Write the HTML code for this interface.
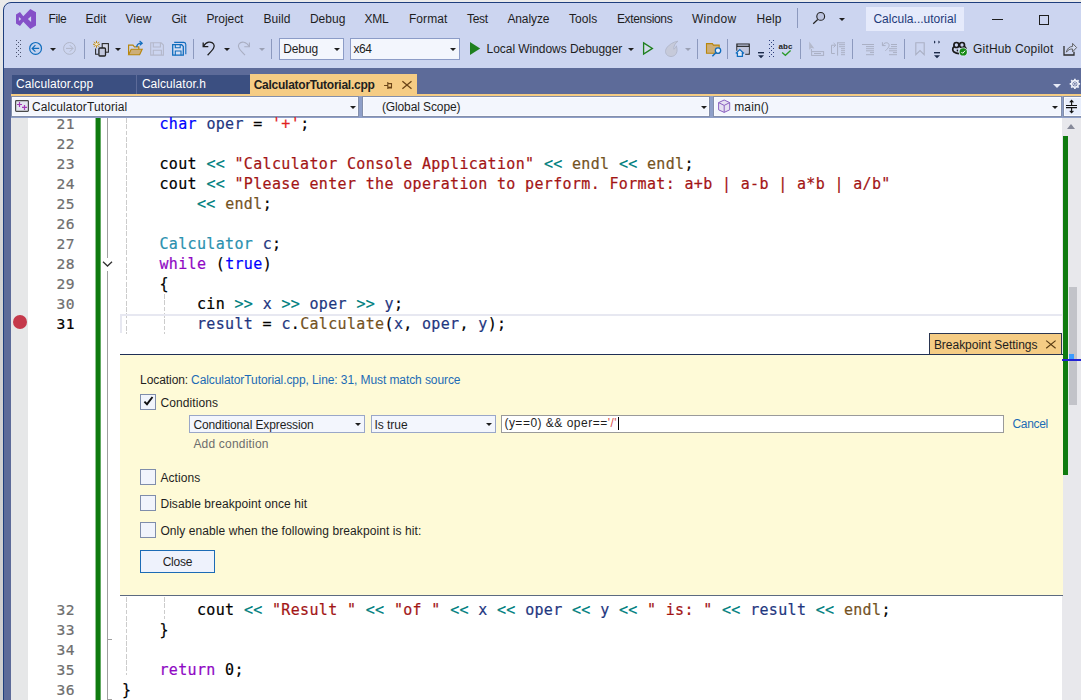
<!DOCTYPE html>
<html lang="en">
<head>
<meta charset="utf-8">
<title>CalculatorTutorial - Microsoft Visual Studio</title>
<style>
html,body{margin:0;padding:0;}
body{width:1081px;height:700px;overflow:hidden;position:relative;background:linear-gradient(to bottom,#ebebeb 0,#e6e6e6 60px,#d2d2d2 260px,#cecece 100%);font-family:"Liberation Sans", "DejaVu Sans", sans-serif;font-size:12px;}
.a{position:absolute;}
#win{left:3px;top:2px;width:1100px;height:720px;box-sizing:border-box;border:1px solid #1f3f7d;border-radius:8px 0 0 0;background:#ccd5f0;}
.t{position:absolute;white-space:pre;line-height:20px;height:20px;font-size:12px;}
.sep{position:absolute;width:1px;top:39px;height:20px;background:#8c99be;}
.combo{position:absolute;box-sizing:border-box;background:#f3f6fd;border:1px solid #8c9cc7;}
.arr{position:absolute;width:0;height:0;border-left:3px solid transparent;border-right:3px solid transparent;border-top:3px solid #1e1e1e;}
.arr.g{border-top-color:#9aa0b4;}
.nav{position:absolute;top:96px;height:21px;box-sizing:border-box;background:#f3f6fd;border:1px solid #838fab;box-shadow:inset 0 0 0 1px #fafbff;}
.ln{position:absolute;left:28px;width:47.2px;text-align:right;white-space:pre;line-height:20px;height:20px;font-family:"DejaVu Sans Mono", "Liberation Mono", monospace;font-size:15.0px;letter-spacing:0.344px;-webkit-text-stroke:0.2px;font-size:14.6px;letter-spacing:0.585px;}
.cl{position:absolute;left:122.0px;white-space:pre;line-height:20px;height:20px;color:#000;font-family:"DejaVu Sans Mono", "Liberation Mono", monospace;font-size:15.0px;letter-spacing:0.344px;-webkit-text-stroke:0.2px;}
.guide{position:absolute;width:1px;background:repeating-linear-gradient(to bottom,#cccccc 0,#cccccc 4.8px,transparent 4.8px,transparent 6.3px);}
.cb{position:absolute;box-sizing:border-box;width:16px;height:16px;left:140px;background:#f1f4fc;border:1px solid #7f8dab;}
svg{position:absolute;overflow:visible;}
</style>
</head>
<body>
<div id="win" class="a"></div>

<!-- title bar -->
<div class="a" style="left:866px;top:7px;width:98px;height:24px;background:#e5eafb;"></div>
<div class="a" style="left:797px;top:8px;width:1px;height:20px;background:#8c99be;"></div>
<div class="a" style="left:992px;top:19px;width:11px;height:1px;background:#1e1e1e;"></div>
<div class="a" style="left:1039px;top:15px;width:10px;height:10px;box-sizing:border-box;border:1px solid #1e1e1e;"></div>

<!-- toolbar -->
<div class="sep" style="left:84px"></div>
<div class="sep" style="left:193px"></div>
<div class="sep" style="left:271px"></div>
<div class="sep" style="left:697px"></div>
<div class="sep" style="left:727px"></div>
<div class="sep" style="left:800px"></div>
<div class="sep" style="left:852px"></div>
<div class="sep" style="left:904px"></div>
<div class="combo" style="left:279px;top:38px;width:65px;height:22px;"></div>
<div class="combo" style="left:350px;top:38px;width:110px;height:22px;"></div>

<!-- document well -->
<div class="a" style="left:4px;top:68px;width:1077px;height:28px;background:#5d6b99;"></div>
<div class="a" style="left:4px;top:96px;width:7px;height:604px;background:#5d6b99;"></div>
<div class="a" style="left:12px;top:75px;width:124px;height:19px;background:#3b4f81;"></div>
<div class="a" style="left:137px;top:75px;width:113px;height:19px;background:#3b4f81;"></div>
<div class="a" style="left:250px;top:74px;width:167px;height:21px;background:#f5cc84;"></div>
<div class="a" style="left:11px;top:94px;width:1070px;height:2px;background:#f5cc84;"></div>

<!-- navigation bar -->
<div class="a" style="left:11px;top:96px;width:1070px;height:22px;background:#8e9fc9;"></div>
<div class="nav" style="left:11px;width:348px;"></div>
<div class="nav" style="left:362px;width:348px;"></div>
<div class="nav" style="left:713px;width:349px;"></div>
<div class="nav" style="left:1063px;width:30px;background:#e8eefc;"></div>
<!-- editor -->
<div class="a" style="left:11px;top:118px;width:1051px;height:582px;background:#ffffff;"></div>
<div class="a" style="left:11px;top:118px;width:17px;height:582px;background:#e6e7e8;"></div>
<div class="a" style="left:107px;top:118px;width:1px;height:582px;background:#a0a0a0;"></div>
<!-- outlining ticks -->
<div class="a" style="left:107px;top:639px;width:5px;height:1px;background:#a0a0a0;"></div>
<div class="a" style="left:107px;top:699px;width:5px;height:1px;background:#a0a0a0;"></div>
<!-- indent guides -->
<div class="guide" style="left:126px;top:118px;height:216px;"></div>
<div class="guide" style="left:164px;top:294px;height:40px;"></div>
<div class="guide" style="left:126px;top:597px;height:78px;"></div>
<div class="guide" style="left:164px;top:597px;height:22px;"></div>
<!-- current line -->
<div class="a" style="left:120px;top:314px;width:942px;height:19px;box-sizing:border-box;border:2px solid #e7e8f1;border-right:0;border-bottom:0;"></div>
<!-- breakpoint glyph -->
<div class="a" style="left:13px;top:315px;width:14px;height:14px;border-radius:50%;background:#c5394b;"></div>

<!-- scrollbar -->
<div class="a" style="left:1062px;top:118px;width:19px;height:582px;background:#e8e8ec;"></div>
<div class="a" style="left:1063px;top:136px;width:5px;height:339px;background:#0f7b0f;"></div>
<div class="a" style="left:1069px;top:287px;width:8px;height:118px;background:#c2c3c9;"></div>
<div class="a" style="left:1067px;top:124px;width:0;height:0;border-left:4.5px solid transparent;border-right:4.5px solid transparent;border-bottom:5px solid #868999;"></div>

<!-- breakpoint settings panel -->
<div class="a" style="left:120px;top:354px;width:943px;height:242px;box-sizing:border-box;background:#fefad7;border-top:1px solid #1f2f55;border-bottom:1px solid #5c6a80;"></div>
<div class="a" style="left:929px;top:333px;width:133px;height:22px;box-sizing:border-box;background:#f5cc84;border:1px solid #2a3550;"></div>
<div class="a" style="left:1062px;top:359px;width:19px;height:2px;background:#2222d4;"></div>
<div class="a" style="left:1069px;top:354px;width:5px;height:5px;background:#3b9cff;"></div>

<div class="cb" style="top:394px;"></div>
<div class="cb" style="top:469px;"></div>
<div class="cb" style="top:495px;"></div>
<div class="cb" style="top:522px;"></div>
<div class="combo" style="left:189px;top:415px;width:176px;height:18px;border-color:#9aa7c8;"></div>
<div class="combo" style="left:371px;top:415px;width:125px;height:18px;border-color:#9aa7c8;"></div>
<div class="a" style="left:501px;top:415px;width:503px;height:18px;box-sizing:border-box;background:#fff;border:1px solid #9a9a9a;"></div>
<div class="a" style="left:618px;top:417px;width:1px;height:13px;background:#000;"></div>
<div class="a" style="left:140px;top:550px;width:75px;height:23px;box-sizing:border-box;background:#eef2fc;border:1px solid #1c6bb5;"></div>

<!-- dropdown arrows -->
<div class="arr" style="left:50px;top:48px"></div>
<div class="arr" style="left:115px;top:48px"></div>
<div class="arr" style="left:224px;top:48px"></div>
<div class="arr g" style="left:259px;top:48px"></div>
<div class="arr" style="left:334px;top:48px"></div>
<div class="arr" style="left:450px;top:48px"></div>
<div class="arr" style="left:628px;top:48px"></div>
<div class="arr g" style="left:685px;top:48px"></div>
<div class="arr" style="left:839px;top:18px"></div>
<div class="arr" style="left:350px;top:106px"></div>
<div class="arr" style="left:701px;top:106px"></div>
<div class="arr" style="left:1052px;top:106px"></div>
<div class="arr" style="left:355px;top:423px"></div>
<div class="arr" style="left:486px;top:423px"></div>

<svg width="1081" height="700" viewBox="0 0 1081 700" style="left:0;top:0;pointer-events:none" fill="none" stroke-linecap="butt">
<!-- VS logo -->
<g transform="translate(16,9)" fill="#8550c8" fill-rule="evenodd" stroke="none">
<path d="M14.3 0 L20 3.3 L20 16.6 L14.3 20 L7.3 12.7 L4 17 L0 14.4 L0 5.6 L4 3 L7.3 7.3 Z M2.9 8 L5.2 10 L2.9 12.1 Z M15.1 7.2 L11.9 10 L15.1 13 Z"/>
</g>
<!-- search (title bar) -->
<circle cx="820.7" cy="16.4" r="3.9" fill="#bdc4df" stroke="#222" stroke-width="1.1"/>
<path d="M817.7 19.5 L813.2 23.8" stroke="#222" stroke-width="1.2"/>

<!-- toolbar grips -->
<g fill="#4c5470" stroke="none">
<rect x="16" y="40" width="1" height="1"/><rect x="20" y="40" width="1" height="1"/><rect x="18" y="42" width="1" height="1"/>
<rect x="16" y="44" width="1" height="1"/><rect x="20" y="44" width="1" height="1"/><rect x="18" y="46" width="1" height="1"/>
<rect x="16" y="48" width="1" height="1"/><rect x="20" y="48" width="1" height="1"/><rect x="18" y="50" width="1" height="1"/>
<rect x="16" y="52" width="1" height="1"/><rect x="20" y="52" width="1" height="1"/><rect x="18" y="54" width="1" height="1"/>
<rect x="16" y="56" width="1" height="1"/><rect x="20" y="56" width="1" height="1"/>
</g>
<g fill="#2f3f7c" stroke="none" transform="translate(753,0)">
<rect x="16" y="40" width="1" height="1"/><rect x="20" y="40" width="1" height="1"/><rect x="18" y="42" width="1" height="1"/>
<rect x="16" y="44" width="1" height="1"/><rect x="20" y="44" width="1" height="1"/><rect x="18" y="46" width="1" height="1"/>
<rect x="16" y="48" width="1" height="1"/><rect x="20" y="48" width="1" height="1"/><rect x="18" y="50" width="1" height="1"/>
<rect x="16" y="52" width="1" height="1"/><rect x="20" y="52" width="1" height="1"/><rect x="18" y="54" width="1" height="1"/>
<rect x="16" y="56" width="1" height="1"/><rect x="20" y="56" width="1" height="1"/>
</g>

<!-- back / forward -->
<circle cx="35.6" cy="48.4" r="5.9" stroke="#0f6cbd" stroke-width="1.2" fill="#c4d3ef"/>
<path d="M39.2 48.4 H32.4 M35.4 45.2 L32.2 48.4 L35.4 51.6" stroke="#0f6cbd" stroke-width="1.2"/>
<circle cx="69.5" cy="48.4" r="5.9" stroke="#b1b6c8" stroke-width="1" />
<path d="M66 48.4 H72.8 M69.8 45.2 L73 48.4 L69.8 51.6" stroke="#b1b6c8" stroke-width="1"/>

<!-- new project -->
<g stroke="#c08a10" stroke-width="1">
<path d="M96.5 40.8 V47.8 M93 44.3 H100 M94 41.8 L99 46.8 M99 41.8 L94 46.8"/>
</g>
<circle cx="96.5" cy="44.3" r="1.3" fill="#f6ecd0" stroke="none"/>
<rect x="102.2" y="43.6" width="6.2" height="8.6" fill="#d3d7e8" stroke="#2b2b2b" stroke-width="1.1"/>
<path d="M95.6 48.6 V54.2 H98.4" stroke="#2b2b2b" stroke-width="1.1"/>
<rect x="98.9" y="48" width="6.6" height="8" rx="1" fill="#c2c7dc" stroke="#222" stroke-width="1.3"/>

<!-- open folder -->
<path d="M128.6 54.6 V45.2 H133 L134.4 46.8 H138.8 V49" stroke="#b8860b" stroke-width="1.2"/>
<path d="M128.6 54.8 L131.2 49.2 H142.2 L139.6 54.8 Z" fill="#cdae78" stroke="#b8860b" stroke-width="1.1"/>
<path d="M136.700 47 C136.900 44.600 138.600 43.300 141.400 43.200" stroke="#0f6cbd" stroke-width="1.300"/>
<path d="M139.600 41 L142.200 43.200 L139.800 45.300" stroke="#0f6cbd" stroke-width="1.200" fill="none"/>

<!-- save (disabled) -->
<g stroke="#b4b8ca" stroke-width="1.1">
<path d="M150.7 42.8 H161.2 L163.4 45 V55.1 H150.7 Z"/>
<path d="M153.3 42.8 V47 H160.4 V42.8 M153.3 55.1 V50.2 H161.4 V55.1"/>
</g>
<!-- save all -->
<g stroke="#0f6cbd" stroke-width="1.3">
<path d="M174.2 42.4 H183.8 Q185.8 42.6 185.8 44.6 V54.2" stroke-width="1.1"/>
<path d="M172.7 44.7 H181.6 L183.3 46.4 V55.2 H172.7 Z" fill="#d5def3"/>
<path d="M175.3 44.7 V47.8 H180.2 V44.7 M175.3 55.2 V51 H181 V55.2" stroke-width="1.1"/>
</g>

<!-- undo / redo -->
<path d="M203.2 42.4 V46.7 H208.3" stroke="#1e1e1e" stroke-width="1.3"/>
<path d="M203.6 46.3 C206 41.5 211.5 41 213.6 44 C215.4 46.6 213.6 49 207.6 55.2" stroke="#1e1e1e" stroke-width="1.3"/>
<path d="M249.4 42.4 V46.7 H244.3" stroke="#a9aec2" stroke-width="1.1"/>
<path d="M249 46.3 C246.600 41.5 241.1 41 239 44 C237.2 46.6 239 49 245 55.2" stroke="#a9aec2" stroke-width="1.1"/>

<!-- start -->
<path d="M470 42 L480.2 48.5 L470 55 Z" fill="#1f801f" stroke="none"/>
<path d="M643.6 42.9 L652.4 48.4 L643.6 54 Z" fill="#d3dbea" stroke="#1f801f" stroke-width="1.3"/>
<!-- hot reload flame (disabled) -->
<path d="M678 41.200 C673 42 669.600 44.400 667.400 47 C664.800 50 665 53.400 667.400 55.300 C670.200 57.400 674.600 56.600 676.200 53.600 C677.600 51 677 48.400 676.400 45.800 C675.800 47.400 675.200 48.400 673.800 49.200 C673.600 46 675 43.400 678 41.200 Z" fill="#c6cada" stroke="#b0b5c8" stroke-width="0.900"/>
<!-- find in files -->
<path d="M706.5 53.200 V43.6 H712.4 L713.4 45.1 H719.2 V53.2 Z" fill="#cdae78" stroke="#b8860b" stroke-width="1.1"/>
<circle cx="718" cy="50.600" r="2.7" fill="#e6eefb" stroke="#0f6cbd" stroke-width="1.3"/>
<path d="M716 52.6 L712.400 56.3" stroke="#0f6cbd" stroke-width="1.4"/>

<!-- window/home -->
<path d="M736.9 50.8 V44 H749.2 V54.2 H745.2" stroke="#222" stroke-width="1.2" fill="none"/>
<rect x="737.5" y="46.800" width="11.2" height="6.8" fill="#c1c6dc" stroke="none"/>
<path d="M736.9 46.300 H749.2" stroke="#222" stroke-width="1.2"/>
<path d="M735.8 53.4 L739.8 49.600 L743.9 53.4 M737.4 52.8 V56.4 H742.4 V52.8" stroke="#0f6cbd" stroke-width="1.3" fill="#eaf1fb"/>
<!-- overflow 1 -->
<rect x="758" y="52" width="6" height="1.4" fill="#1b2a4a"/>
<path d="M758 55.2 H764 L761 58.2 Z" fill="#1b2a4a"/>
<!-- abc check -->
<text x="778.600" y="48.6" font-family="Liberation Sans, sans-serif" font-weight="700" font-size="7.6px" fill="#1e1e1e" stroke="none" textLength="13.8" lengthAdjust="spacingAndGlyphs">abc</text>
<path d="M782.1 52.4 L785.4 55.3 L790.6 50.5" stroke="#2a9a2a" stroke-width="1.3"/>

<!-- disabled icons -->
<g stroke="#aab0c4" stroke-width="1" fill="none">
<path d="M809.2 41.6 V49.8 L811.3 48 L814.4 48.600 Z" fill="#b4b9cb" stroke="none"/>
<path d="M811.4 49 V51.6"/>
<rect x="811.6" y="51.600" width="12" height="3.8"/>
<path d="M814 53.5 H821"/>
<path d="M834.8 53.5 H831.500 V45.2 H835.4 M833.6 43 L835.8 45.2 L833.6 47.4"/>
<path d="M837.6 42.3 V55.6 M837.600 42.8 H845" />
<path d="M839 44.700 H845 M839 46.7 H845 M841 48.7 H845 M841 50.7 H845 M841 52.7 H845 M841 54.7 H845"/>
<path d="M862 44.5 H874 M866 46.6 H874 M866 48.7 H874 M866 50.8 H874 M870 52.600 H874 M866 54.7 H874"/>
<path d="M882.4 42.2 V45.6 H885.6 M882.600 45.4 C884 42.4 887.6 42 888.800 44 C889.800 46 888.6 47.6 885.4 50.800"/>
<path d="M891 44.500 H897 M891 46.6 H897 M889 48.7 H897 M889 50.800 H897 M893 52.600 H897 M889 54.7 H897"/>
<path d="M915.8 42.700 H924.2 V54.6 L920 50.6 L915.8 54.6 Z" stroke-width="1.1"/>
</g>
<!-- overflow 2 -->
<path d="M934 40.500 L935.7 42.100 L934 43.700 Z M938.4 40.500 L940.1 42.1 L938.4 43.7 Z" fill="#1b2a4a"/>
<rect x="934" y="52" width="6" height="1.4" fill="#1b2a4a"/>
<path d="M934 55.2 H940 L937 58.2 Z" fill="#1b2a4a"/>
<!-- copilot -->
<g stroke="#1a1a1a" stroke-width="1.7" fill="none">
<circle cx="956.4" cy="45" r="2.500"/>
<circle cx="962" cy="45" r="2.500"/>
<path d="M954 46.600 C952.2 48.2 952.400 50.8 954 52 C955.6 53.2 957.6 53.600 959.2 53.6"/>
<path d="M964.600 46.6 C965.600 47.4 966 48.2 966 49"/>
<path d="M957.4 49.6 V51.4" stroke-width="1.4"/>
</g>
<circle cx="963.2" cy="51.900" r="4.500" fill="#e4eaf8" stroke="none"/>
<circle cx="963.2" cy="51.9" r="3.700" fill="#168a16" stroke="none"/>
<path d="M961.400 52 L962.700 53.300 L965.100 50.700" stroke="#fff" stroke-width="1"/>
<!-- share -->
<path d="M1064 46 V55 H1074 V51.8" stroke="#2e2e2e" stroke-width="1.300"/>
<path d="M1066.4 52.200 C1067 48.6 1069.4 46.600 1072.600 46.4 V43.4 L1076.6 47.6 L1072.6 51.8 V49 C1070 48.800 1068 49.800 1066.4 52.2 Z" stroke="#555" stroke-width="0.900" fill="#d4dcf2"/>

<!-- tab pin + close -->
<path d="M384.100 85.500 H387.500 M387.800 82.100 V89 M388 83.600 H391.500 V87.600 M388 87.200 H392" stroke="#6b4518" stroke-width="1.100"/>
<path d="M388 87.700 H392" stroke="#6b4518" stroke-width="1.6"/>
<path d="M402.400 81.200 L411.500 88.800 M411.500 81.200 L402.400 88.800" stroke="#6b4518" stroke-width="1.300"/>
<!-- tab well menu + gear -->
<path d="M1053 84 H1061 L1057 88 Z" fill="#e6eaf6"/>
<g transform="translate(1074.900,83.900)">
<circle r="3.300" stroke="#f0f2fa" stroke-width="1.700"/>
<g stroke="#f0f2fa" stroke-width="1.700">
<path d="M0 -3.600 V-5.200 M0 3.600 V5.200 M-3.600 0 H-5.200 M3.600 0 H5.200 M-2.550 -2.550 L-3.700 -3.700 M2.550 2.550 L3.700 3.700 M-2.550 2.550 L-3.700 3.700 M2.550 -2.550 L3.700 -3.700"/>
</g>
<circle r="1.400" stroke="#f0f2fa" stroke-width="0.900"/>
</g>

<!-- nav: project icon -->
<rect x="15.600" y="100.600" width="12.800" height="10.700" rx="0.800" fill="#e3e5ee" stroke="#4a4a4a" stroke-width="1.200"/>
<path d="M17 104.500 H22 M19.500 102 V107 M22 107.400 H27 M24.500 104.900 V109.900" stroke="#a63ab8" stroke-width="1.200"/>
<!-- nav: cube -->
<path d="M724.200 100 L729.700 102.600 V109.800 L724.200 112.400 L718.600 109.800 V102.600 Z" fill="#e6e0f1" stroke="#8a5fc0" stroke-width="1"/>
<path d="M718.600 102.600 L724.200 105.400 L729.700 102.600 M724.200 105.400 V112.400" stroke="#8a5fc0" stroke-width="1"/>
<!-- nav: split -->
<path d="M1066 105.500 H1077 M1066 107.600 H1077" stroke="#111" stroke-width="1.100"/>
<path d="M1071.600 105 V100.800 M1069.800 102.400 L1071.600 100.400 L1073.400 102.400 M1071.600 108 V112.400 M1069.800 110.800 L1071.600 112.800 L1073.400 110.800" stroke="#111" stroke-width="1.100"/>

<rect x="95.550" y="118" width="5.100" height="582" fill="#0f7b0f" stroke="none"/>
<!-- outlining chevron -->
<rect x="103" y="258" width="10" height="13" fill="#fff" stroke="none"/>
<path d="M103 261.700 L107.500 266 L112 261.700" stroke="#333" stroke-width="1.300"/>

<!-- checkbox check -->
<path d="M144.400 401.600 L147 404.200 L152.500 397" stroke="#111" stroke-width="1.900"/>
<!-- breakpoint settings close -->
<path d="M1046.200 340.600 L1055.600 348.200 M1055.600 340.600 L1046.200 348.200" stroke="#5a3d14" stroke-width="1.200"/>
</svg>


<!-- code -->
<div class="ln" style="top:113.95px;color:#6e6e6e">21</div>
<div class="cl" style="top:113.81px"><span style="color:#000000">    </span><span style="color:#0000ff">char</span><span style="color:#000000"> </span><span style="color:#1f377f">oper</span><span style="color:#000000"> = </span><span style="color:#e21f1f">&#x27;+&#x27;</span><span style="color:#000000">;</span></div>
<div class="ln" style="top:133.95px;color:#6e6e6e">22</div>
<div class="ln" style="top:153.95px;color:#6e6e6e">23</div>
<div class="cl" style="top:153.81px"><span style="color:#000000">    cout </span><span style="color:#008080">&lt;&lt;</span><span style="color:#000000"> </span><span style="color:#a31515">&quot;Calculator Console Application&quot;</span><span style="color:#000000"> </span><span style="color:#008080">&lt;&lt;</span><span style="color:#000000"> </span><span style="color:#74531f">endl</span><span style="color:#000000"> </span><span style="color:#008080">&lt;&lt;</span><span style="color:#000000"> </span><span style="color:#74531f">endl</span><span style="color:#000000">;</span></div>
<div class="ln" style="top:173.95px;color:#6e6e6e">24</div>
<div class="cl" style="top:173.81px"><span style="color:#000000">    cout </span><span style="color:#008080">&lt;&lt;</span><span style="color:#000000"> </span><span style="color:#a31515">&quot;Please enter the operation to perform. Format: a+b | a-b | a*b | a/b&quot;</span></div>
<div class="ln" style="top:193.95px;color:#6e6e6e">25</div>
<div class="cl" style="top:193.81px"><span style="color:#000000">        </span><span style="color:#008080">&lt;&lt;</span><span style="color:#000000"> </span><span style="color:#74531f">endl</span><span style="color:#000000">;</span></div>
<div class="ln" style="top:213.95px;color:#6e6e6e">26</div>
<div class="ln" style="top:233.95px;color:#6e6e6e">27</div>
<div class="cl" style="top:233.81px"><span style="color:#000000">    </span><span style="color:#2b91af">Calculator</span><span style="color:#000000"> </span><span style="color:#1f377f">c</span><span style="color:#000000">;</span></div>
<div class="ln" style="top:253.95px;color:#6e6e6e">28</div>
<div class="cl" style="top:253.81px"><span style="color:#000000">    </span><span style="color:#8f08c4">while</span><span style="color:#000000"> (</span><span style="color:#0000ff">true</span><span style="color:#000000">)</span></div>
<div class="ln" style="top:273.95px;color:#6e6e6e">29</div>
<div class="cl" style="top:273.81px"><span style="color:#000000">    {</span></div>
<div class="ln" style="top:293.95px;color:#6e6e6e">30</div>
<div class="cl" style="top:293.81px"><span style="color:#000000">        cin </span><span style="color:#008080">&gt;&gt;</span><span style="color:#000000"> </span><span style="color:#1f377f">x</span><span style="color:#000000"> </span><span style="color:#008080">&gt;&gt;</span><span style="color:#000000"> </span><span style="color:#1f377f">oper</span><span style="color:#000000"> </span><span style="color:#008080">&gt;&gt;</span><span style="color:#000000"> </span><span style="color:#1f377f">y</span><span style="color:#000000">;</span></div>
<div class="ln" style="top:313.95px;color:#000000">31</div>
<div class="cl" style="top:313.81px"><span style="color:#000000">        </span><span style="color:#1f377f">result</span><span style="color:#000000"> = </span><span style="color:#1f377f">c</span><span style="color:#000000">.</span><span style="color:#74531f">Calculate</span><span style="color:#000000">(</span><span style="color:#1f377f">x</span><span style="color:#000000">, </span><span style="color:#1f377f">oper</span><span style="color:#000000">, </span><span style="color:#1f377f">y</span><span style="color:#000000">);</span></div>
<div class="ln" style="top:600.35px;color:#6e6e6e">32</div>
<div class="cl" style="top:600.21px"><span style="color:#000000">        cout </span><span style="color:#008080">&lt;&lt;</span><span style="color:#000000"> </span><span style="color:#a31515">&quot;Result &quot;</span><span style="color:#000000"> </span><span style="color:#008080">&lt;&lt;</span><span style="color:#000000"> </span><span style="color:#a31515">&quot;of &quot;</span><span style="color:#000000"> </span><span style="color:#008080">&lt;&lt;</span><span style="color:#000000"> </span><span style="color:#1f377f">x</span><span style="color:#000000"> </span><span style="color:#008080">&lt;&lt;</span><span style="color:#000000"> </span><span style="color:#1f377f">oper</span><span style="color:#000000"> </span><span style="color:#008080">&lt;&lt;</span><span style="color:#000000"> </span><span style="color:#1f377f">y</span><span style="color:#000000"> </span><span style="color:#008080">&lt;&lt;</span><span style="color:#000000"> </span><span style="color:#a31515">&quot; is: &quot;</span><span style="color:#000000"> </span><span style="color:#008080">&lt;&lt;</span><span style="color:#000000"> </span><span style="color:#1f377f">result</span><span style="color:#000000"> </span><span style="color:#008080">&lt;&lt;</span><span style="color:#000000"> </span><span style="color:#74531f">endl</span><span style="color:#000000">;</span></div>
<div class="ln" style="top:620.35px;color:#6e6e6e">33</div>
<div class="cl" style="top:620.21px"><span style="color:#000000">    }</span></div>
<div class="ln" style="top:640.35px;color:#6e6e6e">34</div>
<div class="ln" style="top:660.35px;color:#6e6e6e">35</div>
<div class="cl" style="top:660.21px"><span style="color:#000000">    </span><span style="color:#8f08c4">return</span><span style="color:#000000"> 0;</span></div>
<div class="ln" style="top:680.35px;color:#6e6e6e">36</div>
<div class="cl" style="top:680.21px"><span style="color:#000000">}</span></div>

<!-- ui text -->
<span class="t" style="left:48.40px;top:8.84px;color:#1e1e1e;letter-spacing:-0.336px">File</span>
<span class="t" style="left:85.40px;top:8.84px;color:#1e1e1e;letter-spacing:0.078px">Edit</span>
<span class="t" style="left:125.40px;top:8.84px;color:#1e1e1e;letter-spacing:0.051px">View</span>
<span class="t" style="left:171.40px;top:8.84px;color:#1e1e1e;letter-spacing:-0.115px">Git</span>
<span class="t" style="left:206.40px;top:8.84px;color:#1e1e1e;letter-spacing:-0.051px">Project</span>
<span class="t" style="left:263.40px;top:8.84px;color:#1e1e1e;letter-spacing:0.062px">Build</span>
<span class="t" style="left:309.90px;top:8.84px;color:#1e1e1e;letter-spacing:0.025px">Debug</span>
<span class="t" style="left:364.40px;top:8.84px;color:#1e1e1e;letter-spacing:-0.229px">XML</span>
<span class="t" style="left:408.90px;top:8.84px;color:#1e1e1e;letter-spacing:0.081px">Format</span>
<span class="t" style="left:466.90px;top:8.84px;color:#1e1e1e;letter-spacing:-0.254px">Test</span>
<span class="t" style="left:507.40px;top:8.84px;color:#1e1e1e;letter-spacing:-0.100px">Analyze</span>
<span class="t" style="left:568.90px;top:8.84px;color:#1e1e1e;letter-spacing:0.097px">Tools</span>
<span class="t" style="left:616.90px;top:8.84px;color:#1e1e1e;letter-spacing:-0.320px">Extensions</span>
<span class="t" style="left:691.90px;top:8.84px;color:#1e1e1e;letter-spacing:0.302px">Window</span>
<span class="t" style="left:756.40px;top:8.84px;color:#1e1e1e;letter-spacing:0.078px">Help</span>
<span class="t" style="left:873.40px;top:8.84px;color:#1f3a7a;letter-spacing:0.017px">Calcula...utorial</span>
<span class="t" style="left:283.20px;top:38.84px;color:#1e1e1e;letter-spacing:-0.095px">Debug</span>
<span class="t" style="left:353.40px;top:38.84px;color:#1e1e1e;letter-spacing:-0.353px">x64</span>
<span class="t" style="left:486.60px;top:38.84px;color:#1e1e1e;letter-spacing:-0.048px">Local Windows Debugger</span>
<span class="t" style="left:973.10px;top:38.84px;color:#1e1e1e;letter-spacing:0.161px">GitHub Copilot</span>
<span class="t" style="left:16.10px;top:73.84px;color:#ffffff;letter-spacing:0.075px">Calculator.cpp</span>
<span class="t" style="left:141.90px;top:73.84px;color:#ffffff;letter-spacing:0.052px">Calculator.h</span>
<span class="t" style="left:253.70px;top:74.74px;color:#1e1e1e;letter-spacing:-0.253px;font-weight:700">CalculatorTutorial.cpp</span>
<span class="t" style="left:31.90px;top:97.24px;color:#1e1e1e;letter-spacing:0.106px">CalculatorTutorial</span>
<span class="t" style="left:381.90px;top:97.24px;color:#1e1e1e;letter-spacing:-0.110px">(Global Scope)</span>
<span class="t" style="left:734.30px;top:97.24px;color:#1e1e1e;letter-spacing:0.081px">main()</span>
<span class="t" style="left:140.10px;top:369.84px;color:#1e1e1e;letter-spacing:-0.078px">Location:</span>
<span class="t" style="left:191.10px;top:369.84px;color:#1c6bb5;letter-spacing:-0.086px">CalculatorTutorial.cpp, Line: 31, Must match source</span>
<span class="t" style="left:160.40px;top:392.54px;color:#1e1e1e;letter-spacing:0.100px">Conditions</span>
<span class="t" style="left:193.40px;top:415.04px;color:#1e1e1e;letter-spacing:-0.111px">Conditional Expression</span>
<span class="t" style="left:374.40px;top:415.04px;color:#1e1e1e;letter-spacing:-0.008px">Is true</span>
<span class="t" style="left:504.40px;top:412.84px;color:#1e1e1e;letter-spacing:0.494px">(y==0) &amp;&amp; oper==<span style="color:#d8504a">'/'</span></span>
<span class="t" style="left:1012.40px;top:414.24px;color:#1c6bb5;letter-spacing:-0.293px">Cancel</span>
<span class="t" style="left:193.40px;top:434.04px;color:#6d6d6d;letter-spacing:0.197px">Add condition</span>
<span class="t" style="left:160.40px;top:467.54px;color:#1e1e1e;letter-spacing:0.092px">Actions</span>
<span class="t" style="left:160.40px;top:493.54px;color:#1e1e1e;letter-spacing:0.072px">Disable breakpoint once hit</span>
<span class="t" style="left:160.40px;top:520.84px;color:#1e1e1e;letter-spacing:0.085px">Only enable when the following breakpoint is hit:</span>
<span class="t" style="left:162.70px;top:551.84px;color:#1e1e1e;letter-spacing:-0.258px">Close</span>
<span class="t" style="left:933.90px;top:334.84px;color:#1e1e1e;letter-spacing:-0.024px">Breakpoint Settings</span>
</body>
</html>
